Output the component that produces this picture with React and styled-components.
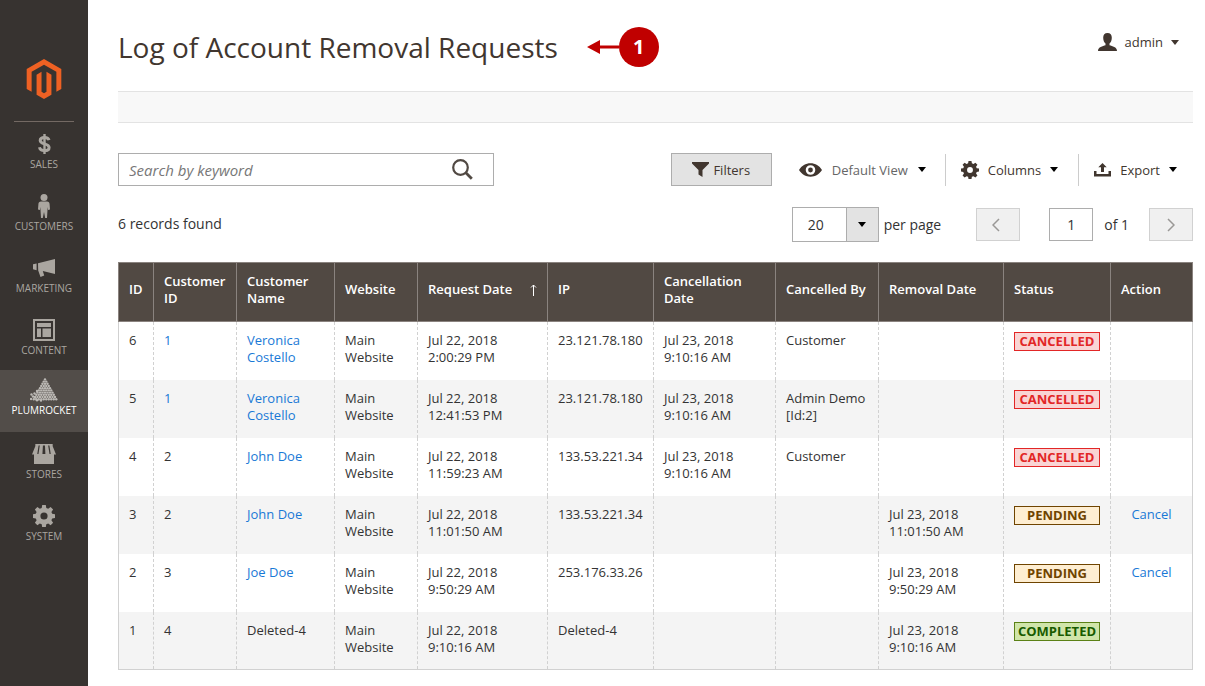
import React, { useState } from 'react';
import styled, { createGlobalStyle, css } from 'styled-components';

const colors = {
  sidebar: '#373330',
  sidebarActive: '#524d49',
  sidebarText: '#aaa6a0',
  brown: '#41362f',
  text: '#333333',
  link: '#1979d6',
  head: '#514943',
  headLine: '#8a837f',
  line: '#d1d1d1',
  control: '#adadad',
  button: '#e3e3e3',
  stripe: '#f4f4f4',
  orange: '#ee6123',
  marker: '#c00000',
};

const statuses = {
  CANCELLED: { color: '#e22626', background: '#f9d4d4' },
  PENDING: { color: '#6f4400', background: '#feeed2' },
  COMPLETED: { color: '#185b00', border: '#5b8116', background: '#d0e5a9' },
};

const columns = [
  { title: 'ID', width: 35 },
  { title: 'Customer ID', width: 83 },
  { title: 'Customer Name', width: 98 },
  { title: 'Website', width: 83 },
  { title: 'Request Date', width: 130, sorted: true },
  { title: 'IP', width: 106 },
  { title: 'Cancellation Date', width: 122 },
  { title: 'Cancelled By', width: 103 },
  { title: 'Removal Date', width: 125 },
  { title: 'Status', width: 107 },
  { title: 'Action', width: 82 },
];

const requests = [
  { id: 6, customer: '1', linked: true, name: 'Veronica Costello', requested: ['Jul 22, 2018', '2:00:29 PM'], ip: '23.121.78.180', cancelled: ['Jul 23, 2018', '9:10:16 AM'], by: 'Customer', status: 'CANCELLED' },
  { id: 5, customer: '1', linked: true, name: 'Veronica Costello', requested: ['Jul 22, 2018', '12:41:53 PM'], ip: '23.121.78.180', cancelled: ['Jul 23, 2018', '9:10:16 AM'], by: 'Admin Demo [Id:2]', status: 'CANCELLED' },
  { id: 4, customer: '2', name: 'John Doe', requested: ['Jul 22, 2018', '11:59:23 AM'], ip: '133.53.221.34', cancelled: ['Jul 23, 2018', '9:10:16 AM'], by: 'Customer', status: 'CANCELLED' },
  { id: 3, customer: '2', name: 'John Doe', requested: ['Jul 22, 2018', '11:01:50 AM'], ip: '133.53.221.34', removed: ['Jul 23, 2018', '11:01:50 AM'], status: 'PENDING' },
  { id: 2, customer: '3', name: 'Joe Doe', requested: ['Jul 22, 2018', '9:50:29 AM'], ip: '253.176.33.26', removed: ['Jul 23, 2018', '9:50:29 AM'], status: 'PENDING' },
  { id: 1, customer: '4', name: 'Deleted-4', deleted: true, requested: ['Jul 22, 2018', '9:10:16 AM'], ip: 'Deleted-4', removed: ['Jul 23, 2018', '9:10:16 AM'], status: 'COMPLETED' },
];

/* icons */

const MagentoLogo = () => (
  <svg width="40" height="40" viewBox="0 0 24 24" fill={colors.orange}>
    <path d="M12 24l-4.455-2.572v-12l2.97-1.715v12.001l1.485.902 1.485-.902V7.713l2.971 1.715v12L12 24zM22.391 6v12l-2.969 1.714V7.713L12 3.43 4.574 7.713v12.001L1.609 18V6L12 0l10.391 6z" />
  </svg>
);

const SalesIcon = () => (
  <svg width="13" height="20" viewBox="0 0 13 20" fill="none" stroke="currentColor">
    <path d="M11 6.2C10.6 4.4 9 3.4 6.5 3.4S2.2 4.5 2.2 6.5c0 4.4 8.900 2.300 8.900 6.900 0 2.100-1.900 3.200-4.600 3.200S1.900 15.500 1.500 13.300" strokeWidth="3" />
    <path d="M6.500 0v20" strokeWidth="2.400" />
  </svg>
);

const CustomersIcon = () => (
  <svg width="12" height="24" viewBox="0 0 12 24" fill="currentColor">
    <circle cx="6" cy="3.500" r="3.500" />
    <path d="M3 7.600h6c1.700 0 2.500 1.100 2.600 2.600l.4 5.300-1.900.6L9.700 13 9 24H7.200L6 18l-1.200 6H3L2.300 13l-.4 3.100L0 15.500l.4-5.300C.5 8.700 1.300 7.600 3 7.600z" />
  </svg>
);

const MarketingIcon = () => (
  <svg width="22" height="18" viewBox="0 0 22 18" fill="currentColor">
    <path d="M22 0v15L9.800 11.900l1.400 4.600-3.700 1.500-2.300-6.600L5 4.200zM0 5.200l3.600-.8v6.800L0 10.200z" />
  </svg>
);

const ContentIcon = () => (
  <svg width="22" height="22" viewBox="0 0 22 22" fill="currentColor">
    <path fillRule="evenodd" d="M0 0h22v22H0zM2 2v18h18V2z" />
    <path d="M4 4h14v4H4zM4 9.500h4V18H4zM9.500 9.500H18V18H9.500z" />
  </svg>
);

const PlumrocketIcon = () => {
  const dots = [];
  for (let row = 0; row < 10; row++) {
    for (let i = 0; i <= row; i++) {
      dots.push([15 + (i - row / 2) * 2.5, 1.4 + row * 2.2]);
    }
  }
  // loose dots that fall off the left foot of the pyramid
  dots.push([1.5, 16.5], [4.5, 15.5], [1, 21], [5, 19.5], [7, 22.2], [3, 18.5], [7, 13], [11, 22.6]);
  return (
    <svg width="28" height="24" viewBox="0 0 28 24" fill="#bcb9b5">
      {dots.map(([x, y], i) => <circle key={i} cx={x} cy={y} r="1.200" />)}
    </svg>
  );
};

const StoresIcon = () => (
  <svg width="24" height="20" viewBox="0 0 24 20" fill="currentColor">
    <path d="M4.200 0h2.600L5.200 10.600H0zM8 0h3l-.6 10.600H6.400zM12.900 0h3l1.700 10.600h-4.200zM17.200 0h2.600L24 10.600h-5.200z" />
    <path d="M2 10h20v10H2zM3.500 0h17l.5 1.500H3z" />
  </svg>
);

const GearIcon = ({ size }) => (
  <svg width={size} height={size} viewBox="0 0 22 22" fill="currentColor">
    <path
      fillRule="evenodd"
      d="M9.200 0h3.600l.5 2.900 1.900.8L17.600 2l2.500 2.500-1.700 2.400.8 1.900 2.800.5v3.600l-2.800.5-.8 1.900 1.700 2.400-2.500 2.500-2.400-1.700-1.900.8-.5 2.900H9.200l-.5-2.900-1.900-.8-2.400 1.700-2.500-2.500 1.700-2.400-.8-1.900L0 12.900V9.300l2.800-.5.8-1.900-1.700-2.400L4.400 2l2.400 1.700 1.900-.8zM11 7.400a3.600 3.600 0 1 0 0 7.200 3.600 3.600 0 0 0 0-7.200z"
    />
  </svg>
);

const UserIcon = () => (
  <svg width="19" height="18" viewBox="0 0 19 18" fill="currentColor">
    <path d="M9.500 0c2.900 0 4.300 1.900 4.300 4.700 0 2.400-.9 4.700-2.300 5.900v1.600c2.700 1 7.500 1.500 7.500 5.800H0c0-4.300 4.800-4.800 7.500-5.800v-1.600C6.100 9.400 5.200 7.100 5.200 4.700 5.200 1.900 6.600 0 9.500 0z" />
  </svg>
);

const SearchIcon = () => (
  <svg width="21" height="21" viewBox="0 0 21 21" fill="none" stroke="currentColor">
    <circle cx="8.500" cy="8.500" r="7.300" strokeWidth="2.200" />
    <path d="M13.600 13.600l6.200 6.200" strokeWidth="2.800" />
  </svg>
);

const FilterIcon = () => (
  <svg width="17" height="15" viewBox="0 0 17 15" fill="currentColor">
    <path d="M0 0h17v1.500L10.500 8v7L6.500 12.500V8L0 1.500z" />
  </svg>
);

const EyeIcon = () => (
  <svg width="23" height="14" viewBox="0 0 24 14" fill="currentColor">
    <path fillRule="evenodd" d="M0 7c2.800-4.500 7-7 12-7s9.200 2.500 12 7c-2.800 4.500-7 7-12 7S2.800 11.500 0 7zM12 2a5 5 0 1 0 0 10 5 5 0 0 0 0-10z" />
    <circle cx="12" cy="7" r="2.500" />
  </svg>
);

const ExportIcon = () => (
  <svg width="17" height="14" viewBox="0 0 17 14" fill="currentColor">
    <path d="M8.500 0l4.200 4.200H10V9H7V4.200H4.300zM0 8h2.500v3h12V8H17v5.500H0z" />
  </svg>
);

const Chevron = ({ flip }) => (
  <svg width="8" height="14" viewBox="0 0 8 14" fill="none" stroke="#9a9896" strokeWidth="1.500">
    <path d={flip ? 'M1 1l6 6-6 6' : 'M7 1L1 7l6 6'} />
  </svg>
);

const SortArrow = () => (
  <svg width="7" height="12" viewBox="0 0 7 12" fill="none" stroke="currentColor">
    <path d="M3.500 12V1M1 3.500L3.500 1 6 3.500" />
  </svg>
);

const Pointer = () => (
  <svg width="32" height="14" viewBox="0 0 32 14" fill={colors.marker}>
    <path d="M0 7L13 0v5.500h19v3H13V14z" />
  </svg>
);

const menu = [
  { label: 'Sales', icon: <SalesIcon /> },
  { label: 'Customers', icon: <CustomersIcon /> },
  { label: 'Marketing', icon: <MarketingIcon /> },
  { label: 'Content', icon: <ContentIcon /> },
  { label: 'Plumrocket', icon: <PlumrocketIcon />, active: true },
  { label: 'Stores', icon: <StoresIcon /> },
  { label: 'System', icon: <GearIcon size={22} /> },
];

const Lines = ({ value }) => value ? <>{value[0]}<br />{value[1]}</> : null;

export default function App() {
  const [keyword, setKeyword] = useState('');
  const [page, setPage] = useState('1');

  return (
    <Layout>
      <GlobalStyle />
      <Sidebar>
        <LogoLink href="#" aria-label="Magento"><MagentoLogo /></LogoLink>
        <Menu>
          {menu.map(({ label, icon, active }) => (
            <MenuLink key={label} href="#" $active={active}>
              <MenuIcon>{icon}</MenuIcon>
              {label}
            </MenuLink>
          ))}
        </Menu>
      </Sidebar>
      <Main>
        <Header>
          <Title>Log of Account Removal Requests</Title>
          <Callout><Pointer /><Marker>1</Marker></Callout>
          <Account><UserIcon />admin<Caret /></Account>
        </Header>
        <ActionsBar />
        <Toolbar>
          <Search>
            <SearchInput
              aria-label="Search by keyword"
              placeholder="Search by keyword"
              value={keyword}
              onChange={e => setKeyword(e.target.value)}
            />
            <SearchButton aria-label="Search"><SearchIcon /></SearchButton>
          </Search>
          <Tools>
            <FilterButton><FilterIcon />Filters</FilterButton>
            <ToolButton $wide><EyeIcon />Default View<Caret $dark /></ToolButton>
            <ToolButton $divided><GearIcon size={18} />Columns<Caret $dark /></ToolButton>
            <ToolButton $divided><ExportIcon />Export<Caret $dark /></ToolButton>
          </Tools>
        </Toolbar>
        <Toolbar $pager>
          <Records>6 records found</Records>
          <Pager>
            <PageSize>
              <SelectBox>
                <Select id="page-size" defaultValue="20">
                  <option>20</option>
                  <option>30</option>
                  <option>50</option>
                </Select>
                <SelectArrow><Caret $dark /></SelectArrow>
              </SelectBox>
              <label htmlFor="page-size">per page</label>
            </PageSize>
            <PageButton disabled aria-label="Previous page"><Chevron /></PageButton>
            <PageNumber>
              <PageInput id="page" value={page} onChange={e => setPage(e.target.value)} />
              <label htmlFor="page">of 1</label>
            </PageNumber>
            <PageButton disabled aria-label="Next page"><Chevron flip /></PageButton>
          </Pager>
        </Toolbar>
        <Table>
          <colgroup>
            {columns.map(({ title, width }) => <col key={title} style={{ width }} />)}
          </colgroup>
          <thead>
            <tr>
              {columns.map(({ title, sorted }) => (
                <HeadCell key={title}>
                  {sorted ? <Sorted>{title}<SortArrow /></Sorted> : title}
                </HeadCell>
              ))}
            </tr>
          </thead>
          <tbody>
            {requests.map(row => (
              <Row key={row.id}>
                <Cell>{row.id}</Cell>
                <Cell>{row.linked ? <Link href="#">{row.customer}</Link> : row.customer}</Cell>
                <Cell>{row.deleted ? row.name : <Link href="#">{row.name}</Link>}</Cell>
                <Cell>Main Website</Cell>
                <Cell><Lines value={row.requested} /></Cell>
                <Cell>{row.ip}</Cell>
                <Cell><Lines value={row.cancelled} /></Cell>
                <Cell>{row.by}</Cell>
                <Cell><Lines value={row.removed} /></Cell>
                <Cell><Status $status={row.status}>{row.status}</Status></Cell>
                <Cell $center>{row.status === 'PENDING' && <Link href="#">Cancel</Link>}</Cell>
              </Row>
            ))}
          </tbody>
        </Table>
      </Main>
    </Layout>
  );
}

const GlobalStyle = createGlobalStyle`
  * {
    box-sizing: border-box;
  }
  body {
    margin: 0;
    background-color: #fff;
    color: ${colors.text};
    font-family: "Open Sans", "Noto Sans", sans-serif;
    font-size: 14px;
  }
  button, input, select {
    font: inherit;
    color: inherit;
  }
  svg {
    display: block;
    flex-shrink: 0;
  }
`
const Layout = styled.div`
  display: flex;
  min-height: 100vh;
`
const Sidebar = styled.aside`
  flex: 0 0 88px;
  background-color: ${colors.sidebar};
`
const LogoLink = styled.a`
  display: flex;
  justify-content: center;
  margin: 0 14px;
  padding: 59px 0 22px;
  border-bottom: 1px solid #736963;
`
const Menu = styled.nav`
  display: flex;
  flex-direction: column;
`
const MenuLink = styled.a`
  height: 62px;
  padding-top: 9px;
  color: ${colors.sidebarText};
  font-size: 10px;
  line-height: 16px;
  text-align: center;
  text-decoration: none;
  text-transform: uppercase;
  ${({ $active }) => $active && css`
    padding-top: 7px;
    color: #fff;
    background-color: ${colors.sidebarActive};
  `}
`
const MenuIcon = styled.span`
  display: flex;
  align-items: center;
  justify-content: center;
  height: 25px;
  color: ${colors.sidebarText};
`
const Main = styled.main`
  flex: 1;
  min-width: 0;
  padding: 0 12px 16px 30px;
`
const Header = styled.header`
  display: flex;
  align-items: center;
  height: 91px;
  padding: 2px 14px 0 0;
`
const Title = styled.h1`
  margin: 0;
  color: ${colors.brown};
  font-size: 28px;
  font-weight: 400;
  line-height: 36px;
  white-space: nowrap;
`
const Callout = styled.div`
  display: flex;
  align-items: center;
  margin-left: 29px;
`
const Marker = styled.span`
  width: 40px;
  height: 40px;
  border-radius: 50%;
  background-color: ${colors.marker};
  color: #fff;
  font-size: 20px;
  font-weight: 700;
  line-height: 40px;
  text-align: center;
`
const Account = styled.button`
  display: flex;
  align-items: center;
  gap: 8px;
  margin-left: auto;
  margin-bottom: 9px;
  padding: 0;
  border: 0;
  background: none;
  color: ${colors.brown};
  font-size: 13px;
`
const Caret = styled.span`
  border: 4px solid transparent;
  border-top: 5px solid ${({ $dark }) => ($dark ? '#000' : colors.brown)};
  border-bottom: 0;
`
const ActionsBar = styled.div`
  height: 32px;
  border: 1px solid #e3e3e3;
  border-width: 1px 0;
  background-color: #f8f8f8;
`
const Toolbar = styled.div`
  display: flex;
  align-items: center;
  justify-content: space-between;
  margin-top: ${({ $pager }) => ($pager ? 21 : 30)}px;
`
const Search = styled.form`
  display: flex;
  flex: 0 1 376px;
  height: 33px;
  border: 1px solid ${colors.control};
`
const SearchInput = styled.input`
  flex: 1;
  min-width: 0;
  padding: 0 10px;
  border: 0;
  outline: none;
  background: none;
  font-size: 15px;
  &::placeholder {
    color: #777;
    font-style: italic;
    opacity: 1;
  }
`
const SearchButton = styled.button.attrs({ type: 'button' })`
  padding: 0 20px;
  border: 0;
  background: none;
  color: #514943;
`
const Tools = styled.div`
  display: flex;
  align-items: center;
`
const FilterButton = styled.button`
  display: flex;
  align-items: center;
  justify-content: center;
  gap: 4px;
  width: 101px;
  height: 33px;
  padding: 0;
  border: 1px solid ${colors.control};
  background-color: ${colors.button};
  color: ${colors.brown};
  font-size: 13px;
  font-weight: 500;
`
const ToolButton = styled.button`
  display: flex;
  align-items: center;
  gap: 9px;
  height: 32px;
  padding: 0 20px 0 15px;
  border: 0;
  border-left: ${({ $divided }) => ($divided ? `1px solid #ccc` : '0')};
  background: none;
  color: ${colors.brown};
  font-size: 13px;
  ${({ $wide }) => $wide && css`
    gap: 10px;
    padding: 0 19px 0 27px;
    color: #666;
    svg { color: ${colors.brown}; }
  `}
  &:last-child {
    padding-right: 16px;
  }
`
const Records = styled.span`
  padding-bottom: 2px;
`
const Pager = styled.div`
  display: flex;
  align-items: center;
`
const PageSize = styled.div`
  display: flex;
  align-items: center;
  gap: 5px;
  margin-right: 35px;
`
const SelectBox = styled.div`
  display: flex;
  position: relative;
`
const Select = styled.select`
  appearance: none;
  width: 87px;
  height: 35px;
  padding: 0 40px 0 15px;
  border: 1px solid ${colors.control};
  border-radius: 0;
  background-color: #fff;
`
const SelectArrow = styled.span`
  display: flex;
  align-items: center;
  justify-content: center;
  position: absolute;
  top: 0;
  right: 0;
  bottom: 0;
  width: 33px;
  border: 1px solid ${colors.control};
  background-color: ${colors.button};
  pointer-events: none;
`
const PageButton = styled.button`
  display: flex;
  align-items: center;
  justify-content: center;
  width: 44px;
  height: 33px;
  padding: 0 4px 0 0;
  border: 1px solid ${colors.line};
  background-color: #f0f0f0;
  &:last-child {
    padding: 0;
  }
`
const PageNumber = styled.div`
  display: flex;
  align-items: center;
  gap: 11px;
  margin: 0 20px 0 29px;
`
const PageInput = styled.input`
  width: 44px;
  height: 33px;
  padding: 0;
  border: 1px solid ${colors.control};
  text-align: center;
`
const Table = styled.table`
  width: 100%;
  margin-top: 20px;
  border-collapse: collapse;
  table-layout: fixed;
  font-size: 13px;
  line-height: 17px;
`
const HeadCell = styled.th`
  height: 59px;
  padding: 0 10px 5px;
  border: 1px solid ${colors.headLine};
  background-color: ${colors.head};
  color: #fff;
  font-weight: 600;
  text-align: left;
`
const Sorted = styled.div`
  display: flex;
  align-items: center;
  justify-content: space-between;
  white-space: nowrap;
`
const Row = styled.tr`
  border: 1px solid ${colors.line};
  border-width: 0 1px;
  &:nth-child(even) {
    background-color: ${colors.stripe};
  }
  &:last-child {
    border-bottom-width: 1px;
  }
`
const Cell = styled.td`
  height: 58px;
  padding: 10px 10px 0;
  border-left: 1px dashed ${colors.line};
  vertical-align: top;
  text-align: ${({ $center }) => ($center ? 'center' : 'left')};
  &:first-child {
    border-left: 1px solid ${colors.line};
  }
`
const Link = styled.a`
  color: ${colors.link};
  text-decoration: none;
`
const Status = styled.span`
  display: block;
  border: 1px solid ${({ $status }) => statuses[$status].border || statuses[$status].color};
  background-color: ${({ $status }) => statuses[$status].background};
  color: ${({ $status }) => statuses[$status].color};
  font-weight: 700;
  text-align: center;
`
